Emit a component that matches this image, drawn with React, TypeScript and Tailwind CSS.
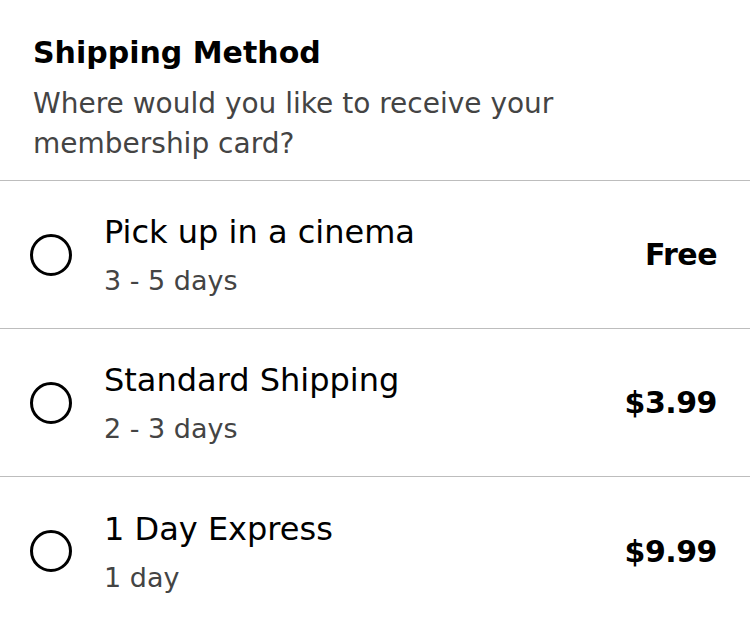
const options = [
  { title: "Pick up in a cinema", eta: "3 - 5 days", price: "Free" },
  { title: "Standard Shipping", eta: "2 - 3 days", price: "$3.99" },
  { title: "1 Day Express", eta: "1 day", price: "$9.99" },
];

function Radio() {
  return <span className="block w-[42px] h-[42px] rounded-full border-[3px] border-black shrink-0" />;
}

export default function App() {
  return (
    <div className="min-h-screen bg-white font-['DejaVu_Sans',sans-serif] text-black">
      <div className="px-[33px] pt-[33px] pb-[16px] border-b border-[#bdbdbd]">
        <h1 className="text-[30px] leading-[40px] font-bold">Shipping Method</h1>
        <p className="mt-[11px] text-[28px] leading-[40px] text-[#444]">
          Where would you like to receive your
          <br />
          membership card?
        </p>
      </div>
      {options.map((o, i) => (
        <label
          key={o.title}
          className={`flex items-center h-[148px] pl-[30px] pr-[33px] ${i < options.length - 1 ? "border-b border-[#bdbdbd]" : ""}`}
        >
          <Radio />
          <div className="ml-[32px] pt-[4px] flex-1">
            <div className="text-[32px] leading-[40px]">{o.title}</div>
            <div className="mt-[9px] text-[27px] leading-[40px] text-[#444]">{o.eta}</div>
          </div>
          <div className="text-[30px] font-bold tracking-[-0.5px]">{o.price}</div>
        </label>
      ))}
    </div>
  );
}
